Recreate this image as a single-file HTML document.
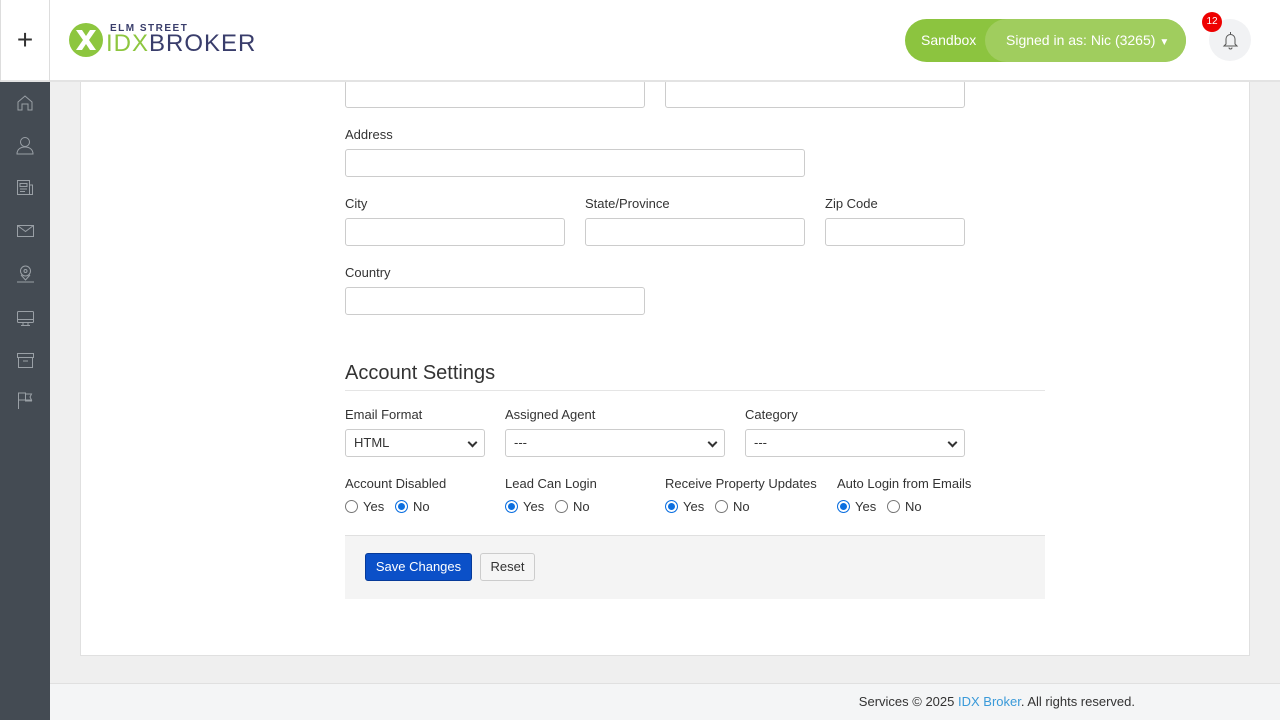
<!DOCTYPE html>
<html><head><style>
*{box-sizing:border-box;margin:0;padding:0}
body{width:1280px;height:720px;overflow:hidden;background:#efefef;font-family:"Liberation Sans",sans-serif;font-size:13px;color:#333;position:relative}
.a{position:absolute}
.hdr{left:0;top:0;width:1280px;height:82px;background:#fff;border-bottom:2px solid #e3e3e3;z-index:2}
.plus{left:0;top:0;width:50px;height:82px;border-right:1px solid #ddd;border-left:1px solid #ddd;font-size:28px;text-align:center;line-height:80px;font-weight:300}
.side{left:0;top:82px;width:50px;height:638px;background:#444b53}
.card{left:80px;top:60px;width:1170px;height:596px;background:#fff;border:1px solid #e0e0e0}
.inp{position:absolute;height:28px;border:1px solid #ccc;border-radius:3px;background:#fff}
.lbl{position:absolute;font-size:13px;color:#333}
.sel{position:absolute;height:28px;border:1px solid #ccc;border-radius:3px;background:#fff;padding-left:8px;line-height:26px;font-size:13px}
.sel:after{content:"";position:absolute;right:8px;top:9px;width:5px;height:5px;border-right:2px solid #333;border-bottom:2px solid #333;transform:rotate(45deg)}
.r{position:absolute;font-size:13px;top:499px}
.rb{display:inline-block;width:13px;height:13px;border:1px solid #777;border-radius:50%;vertical-align:-2px;margin-right:5px;background:#fff}
.rb.on{border:1px solid #0b6fe0;box-shadow:inset 0 0 0 2px #fff;background:#0b6fe0}
.foot{left:50px;top:683px;width:1230px;height:37px;background:#f4f5f6;border-top:1px solid #e0e0e0;font-size:13px;color:#333;text-align:right;padding-right:145px;line-height:36px}
</style></head><body>
<div class="a card"></div>
<div class="a hdr">
<div class="a plus">+</div>
<svg class="a" style="left:68px;top:22px" width="36" height="36" viewBox="0 0 36 36"><circle cx="18" cy="18" r="17" fill="#8dc63f"/><path d="M8 8 L14 8 L18 14 L22 8 L28 8 L21 18 L28 28 L22 28 L18 22 L14 28 L8 28 L15 18Z" fill="#fff"/></svg>
<div class="a" style="left:110px;top:23px;font-size:10px;font-weight:bold;letter-spacing:1.5px;color:#393d6b">ELM STREET</div>
<div class="a" style="left:106px;top:32px;font-size:24px;letter-spacing:1px;line-height:24px"><span style="color:#8dc63f">IDX</span><span style="color:#393d6b">BROKER</span></div>
<div class="a" style="left:905px;top:19px;width:281px;height:43px;border-radius:22px;background:#8cc43f"></div>
<div class="a" style="left:985px;top:19px;width:201px;height:43px;border-radius:22px;background:#a0cd5e;color:#fff;font-size:14px;line-height:43px;padding-left:21px">Signed in as: Nic (3265) <span style="font-size:10px">▼</span></div>
<div class="a" style="left:921px;top:19px;color:#fff;font-size:14px;line-height:43px">Sandbox</div>
<div class="a" style="left:1209px;top:19px;width:42px;height:42px;border-radius:50%;background:#f1f2f4"></div>
<svg class="a" style="left:1222px;top:31px" width="17" height="19" viewBox="0 0 17 19" fill="none" stroke="#555" stroke-width="1"><path d="M8.5 1v2M4 13V8a4.5 4.5 0 019 0v5l2 2H2z M7 16.5a1.5 1.5 0 003 0"/></svg>
<div class="a" style="left:1202px;top:12px;width:20px;height:20px;border-radius:50%;background:#e00;color:#fff;font-size:10px;text-align:center;line-height:20px">12</div>
</div>
<div class="a side">
<svg width="50" height="340" fill="none" stroke="#9aa0a6" stroke-width="1">
<path d="M18 28v-8l7-6 7 6v8h-4v-6h-6v6z"/>
<circle cx="25" cy="60" r="4.5"/><path d="M17 72c0-5 4-7 8-7s8 2 8 7z"/>
<rect x="17.5" y="98.5" width="12" height="14"/><path d="M29.5 103h3v9.5h-3M20 101.5h7v3h-7zM20 107h7M20 109.5h5"/>
<rect x="17.5" y="143.5" width="16" height="11"/><path d="M17.5 143.5l8 6 8-6"/>
<circle cx="25.5" cy="189" r="5"/><circle cx="25.5" cy="189" r="1.5"/><path d="M21 193l4.5 5 4.5-5M17 200h17"/>
<rect x="17.5" y="229.5" width="16" height="11" rx="1"/><path d="M17.5 237.5h16M23 240.5v3h5v-3M21 243.5h9"/>
<rect x="17.5" y="271.5" width="16" height="4"/><rect x="18.5" y="275.5" width="14" height="10"/><path d="M23 279h5"/>
<path d="M18.5 327v-16h7v7h-7M25.5 312h6l-1.5 3 1.5 3h-6M25 319h7"/>
</svg>
</div>
<div class="inp" style="left:345px;top:80px;width:300px"></div>
<div class="inp" style="left:665px;top:80px;width:300px"></div>
<div class="lbl" style="left:345px;top:127px">Address</div>
<div class="inp" style="left:345px;top:149px;width:460px"></div>
<div class="lbl" style="left:345px;top:196px">City</div>
<div class="lbl" style="left:585px;top:196px">State/Province</div>
<div class="lbl" style="left:825px;top:196px">Zip Code</div>
<div class="inp" style="left:345px;top:218px;width:220px"></div>
<div class="inp" style="left:585px;top:218px;width:220px"></div>
<div class="inp" style="left:825px;top:218px;width:140px"></div>
<div class="lbl" style="left:345px;top:265px">Country</div>
<div class="inp" style="left:345px;top:287px;width:300px"></div>
<div class="a" style="left:345px;top:362px;width:700px;height:29px;border-bottom:1px solid #e5e5e5;font-size:20px;color:#333">Account Settings</div>
<div class="lbl" style="left:345px;top:407px">Email Format</div>
<div class="lbl" style="left:505px;top:407px">Assigned Agent</div>
<div class="lbl" style="left:745px;top:407px">Category</div>
<div class="sel" style="left:345px;top:429px;width:140px">HTML</div>
<div class="sel" style="left:505px;top:429px;width:220px">---</div>
<div class="sel" style="left:745px;top:429px;width:220px">---</div>
<div class="lbl" style="left:345px;top:476px">Account Disabled</div>
<div class="lbl" style="left:505px;top:476px">Lead Can Login</div>
<div class="lbl" style="left:665px;top:476px">Receive Property Updates</div>
<div class="lbl" style="left:837px;top:476px">Auto Login from Emails</div>
<div class="r" style="left:345px"><span class="rb"></span>Yes &nbsp; <span class="rb on"></span>No</div>
<div class="r" style="left:505px"><span class="rb on"></span>Yes &nbsp; <span class="rb"></span>No</div>
<div class="r" style="left:665px"><span class="rb on"></span>Yes &nbsp; <span class="rb"></span>No</div>
<div class="r" style="left:837px"><span class="rb on"></span>Yes &nbsp; <span class="rb"></span>No</div>
<div class="a" style="left:345px;top:535px;width:700px;height:64px;background:#f4f4f4;border-top:1px solid #e0e0e0"></div>
<div class="a" style="left:365px;top:553px;width:107px;height:28px;background:#0b50c8;border:1px solid #063a99;border-radius:3px;color:#fff;text-align:center;line-height:26px">Save Changes</div>
<div class="a" style="left:480px;top:553px;width:55px;height:28px;background:#f5f5f5;border:1px solid #ccc;border-radius:3px;text-align:center;line-height:26px">Reset</div>
<div class="a foot">Services © 2025 <span style="color:#3a9ad9">IDX Broker</span>. All rights reserved.</div>
</body></html>
